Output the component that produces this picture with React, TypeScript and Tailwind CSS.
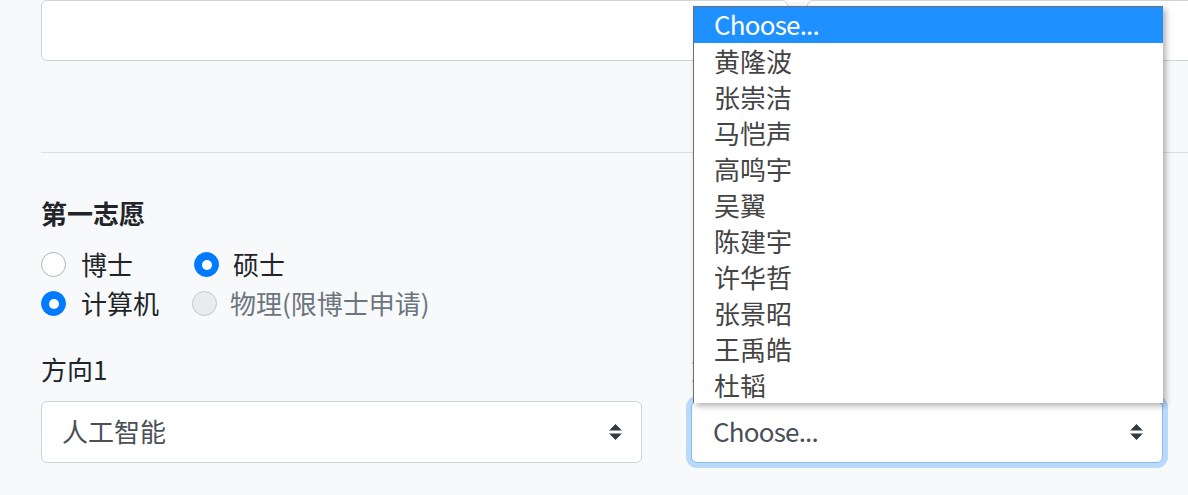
import React from "react";

const Arrows = () => (
  <svg width="13" height="16" viewBox="0 0 4 5" className="shrink-0">
    <path d="M2 0L0 2h4zm0 5L0 3h4z" fill="#343a40" />
  </svg>
);

const Radio = ({ checked, disabled }: { checked?: boolean; disabled?: boolean }) => {
  if (checked) {
    return (
      <span className="flex h-[25px] w-[25px] shrink-0 items-center justify-center rounded-full border border-[#007bff] bg-[#007bff]">
        <span className="h-[10px] w-[10px] rounded-full bg-white" />
      </span>
    );
  }
  return (
    <span
      className={
        disabled
          ? "h-[25px] w-[25px] shrink-0 rounded-full border border-[#c4c9ce] bg-[#e9ecef]"
          : "h-[25px] w-[25px] shrink-0 rounded-full border border-[#adb5bd] bg-white"
      }
    />
  );
};

const options = [
  "黄隆波",
  "张崇洁",
  "马恺声",
  "高鸣宇",
  "吴翼",
  "陈建宇",
  "许华哲",
  "张景昭",
  "王禹皓",
  "杜韬",
];

export default function App() {
  return (
    <div className="relative h-[495px] w-[1188px] overflow-hidden bg-[#f8f9fa] font-['Noto_Sans_CJK_SC','Noto_Sans',sans-serif] text-[26px] leading-[39px] text-[#212529]">
      <div className="pl-[41px]">
        <div className="flex gap-[19px]">
          <div className="h-[61px] w-[747px] shrink-0 rounded-[6px] border border-[#ced4da] bg-white" />
          <div className="h-[61px] w-[420px] shrink-0 rounded-[6px] border border-[#ced4da] bg-white" />
        </div>
        <div className="mt-[91px] h-px bg-[#dcdfe2]" />
        <div className="mt-[41px] font-bold">
          <span className="inline-block -translate-y-[1px]">第一志愿</span>
        </div>
        <div className="mt-[12px]">
          <div className="flex h-[39px] items-center">
            <div className="flex w-[153px] items-center gap-[15px]">
              <Radio />
              <span className="-translate-y-px">博士</span>
            </div>
            <div className="flex items-center gap-[14px]">
              <Radio checked />
              <span className="-translate-y-px">硕士</span>
            </div>
          </div>
          <div className="flex h-[39px] items-center">
            <div className="flex w-[151px] items-center gap-[15px]">
              <Radio checked />
              <span className="-translate-y-px">计算机</span>
            </div>
            <div className="flex items-center gap-[13px]">
              <Radio disabled />
              <span className="-translate-y-px text-[#6c757d]">物理(限博士申请)</span>
            </div>
          </div>
        </div>
        <div className="mt-[28px] flex gap-[49px]">
          <div className="w-[601px]">
            <div className="-translate-y-[2px]">方向1</div>
            <div className="mt-[11px] flex h-[62px] items-center justify-between rounded-[6px] border border-[#ced4da] bg-white pl-[20px] pr-[19px] text-[#495057]">
              <span className="-translate-y-[2px]">人工智能</span>
              <Arrows />
            </div>
          </div>
          <div className="w-[472px]">
            <div className="-translate-y-[2px]">方向2</div>
            <div className="mt-[11px] flex h-[62px] items-center justify-between rounded-[6px] border border-[#80bdff] bg-white pl-[21px] pr-[19px] text-[#495057] shadow-[0_0_0_5px_rgba(0,123,255,0.25)]">
              <span className="-translate-y-[2px] tracking-[-0.8px]">Choose...</span>
              <Arrows />
            </div>
          </div>
        </div>
      </div>

      <div className="absolute left-[693px] top-[6px] w-[470px] border-l border-t border-[#6e6e6e] bg-white shadow-[3px_3px_6px_rgba(0,0,0,0.3)]">
        <div className="flex h-[36px] items-center bg-[#1e90ff] pl-[20px] text-white">
          <span className="-translate-y-[2px] tracking-[-0.8px]">Choose...</span>
        </div>
        {options.map((o) => (
          <div key={o} className="flex h-[36px] items-center pl-[20px] text-[#444444]">
            <span className="-translate-y-[1px]">{o}</span>
          </div>
        ))}
      </div>
    </div>
  );
}
